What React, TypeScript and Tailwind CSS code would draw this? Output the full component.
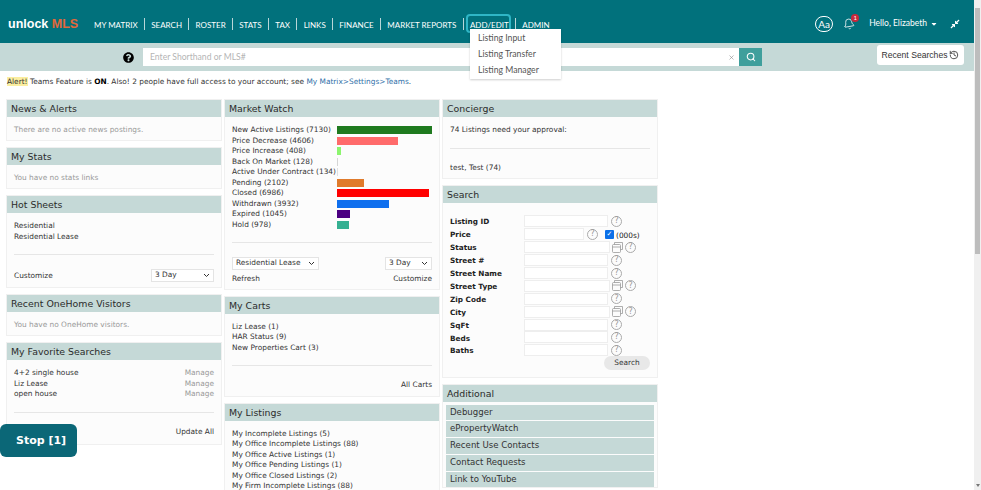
import type { ReactNode } from 'react';
import { Search, History, Bell, X } from 'lucide-react';
import { FaQuestionCircle, FaCaretDown, FaCompressAlt } from 'react-icons/fa';

const NAV = ['MY MATRIX', 'SEARCH', 'ROSTER', 'STATS', 'TAX', 'LINKS', 'FINANCE', 'MARKET REPORTS', 'ADD/EDIT', 'ADMIN'];

const WATCH = [
  { label: 'New Active Listings (7130)', w: 95, color: 'bg-[#1f7a1f]' },
  { label: 'Price Decrease (4606)', w: 61, color: 'bg-[#ff6b6b]' },
  { label: 'Price Increase (408)', w: 4, color: 'bg-[#8cf56e]' },
  { label: 'Back On Market (128)', w: 1, color: 'bg-[#d5d5d5]' },
  { label: 'Active Under Contract (134)', w: 1, color: 'bg-[#e0e0e0]' },
  { label: 'Pending (2102)', w: 27, color: 'bg-[#e07b2c]' },
  { label: 'Closed (6986)', w: 92, color: 'bg-[#ff0000]' },
  { label: 'Withdrawn (3932)', w: 52, color: 'bg-[#0f6fee]' },
  { label: 'Expired (1045)', w: 13, color: 'bg-[#4b0082]' },
  { label: 'Hold (978)', w: 12, color: 'bg-[#35b092]' },
];

const FIELDS = [
  { label: 'Listing ID' },
  { label: 'Price', price: true },
  { label: 'Status', picker: true },
  { label: 'Street #' },
  { label: 'Street Name' },
  { label: 'Street Type', picker: true },
  { label: 'Zip Code' },
  { label: 'City', picker: true },
  { label: 'SqFt' },
  { label: 'Beds' },
  { label: 'Baths' },
];

function Panel({ title, className = '', children }: { title: string; className?: string; children: ReactNode }) {
  return (
    <div className={`mb-[8px] bg-[#fcfcfc] shadow-[0_0_0_1px_#f0f0f0] ${className}`}>
      <div className="h-[17px] bg-[#c5d9d7] pl-[4px] text-[9.4px] leading-[17px] text-[#2b2b2b]">{title}</div>
      {children}
    </div>
  );
}

function Muted({ children }: { children: ReactNode }) {
  return <div className="h-[23px] pl-[7px] pt-[8px] text-[7.4px] leading-[10px] text-[#999]">{children}</div>;
}

function FakeSelect({ label, className }: { label: string; className: string }) {
  return (
    <div className={`flex h-[13px] items-center justify-between border border-[#e4e4e4] bg-white px-[3px] text-[7.4px] text-[#333] ${className}`}>
      <span className="whitespace-nowrap">{label}</span>
      <svg width="7" height="5" viewBox="0 0 7 5" fill="none" stroke="#333" strokeWidth="1"><path d="M1 1l2.5 2.5L6 1" /></svg>
    </div>
  );
}

function HelpIcon() {
  return (
    <span className="flex h-[11px] w-[11px] items-center justify-center rounded-full border border-[#aaa] text-[8px] leading-none text-[#999]">?</span>
  );
}

function PickerIcon() {
  return (
    <svg width="11" height="11" viewBox="0 0 11 11" fill="none" stroke="#999" strokeWidth="0.8">
      <rect x="0.5" y="2.5" width="8" height="8" rx="1" />
      <path d="M2.5 2.5V0.5h8v7H8.5M0.5 5h8" />
    </svg>
  );
}

function SearchRow({ label, price, picker }: { label: string; price?: boolean; picker?: boolean }) {
  return (
    <div className="flex h-[12.9px] items-center">
      <span className="w-[74px] shrink-0 pt-[3px] text-[7.3px] font-bold text-[#222]">{label}</span>
      {price ? (
        <>
          <span className="h-[12px] w-[60px] border border-[#eee] bg-white" />
          <span className="ml-[3px]"><HelpIcon /></span>
          <span className="ml-[7px] flex h-[9px] w-[9px] items-center justify-center rounded-[1px] bg-[#0b6fe8] text-[7px] font-bold leading-none text-white">✓</span>
          <span className="ml-[2px] mt-[2px] text-[7.4px] text-[#222]">(000s)</span>
        </>
      ) : picker ? (
        <>
          <span className="h-[12px] w-[86px] border border-[#eee] bg-white" />
          <span className="ml-[2px]"><PickerIcon /></span>
          <span className="ml-[2px]"><HelpIcon /></span>
        </>
      ) : (
        <>
          <span className="h-[12px] w-[84px] border border-[#eee] bg-white" />
          <span className="ml-[3px]"><HelpIcon /></span>
        </>
      )}
    </div>
  );
}

export default function App() {
  return (
    <div className="relative flex h-[490px] w-[981px] overflow-hidden bg-white font-['DejaVu_Sans',sans-serif]">
      <div className="w-[974px] shrink-0">
        {/* Top nav */}
        <div className="flex h-[43px] items-center bg-[#01717c] pt-[5px] font-['Lato',sans-serif] text-white">
          <div className="ml-[8px] w-[86px] shrink-0 font-['Liberation_Sans',sans-serif] text-[12.5px] font-bold leading-none">
            unlock <span className="text-[#e2683a]">MLS</span>
          </div>
          <div className="flex items-center text-[8px]">
            {NAV.map((item, i) => (
              <div key={item} className="flex items-center">
                <span className="whitespace-nowrap pt-[1px]">{item}</span>
                {i < NAV.length - 1 && <span className="mx-[6.3px] h-[12px] w-px bg-[#b9d6d8]" />}
              </div>
            ))}
          </div>
          <div className="ml-auto flex items-center">
            <span className="flex h-[16px] w-[18px] items-center justify-center rounded-full border border-white text-[10px]">Aa</span>
            <span className="relative ml-[10px]">
              <Bell size={12} strokeWidth={1.5} className="rotate-[-10deg]" />
              <span className="absolute -right-[4px] -top-[4px] flex h-[8px] w-[8px] items-center justify-center rounded-full bg-[#c8283c] text-[6px] leading-none">1</span>
            </span>
            <span className="ml-[14px] mb-[2px] text-[8.5px]">Hello, Elizabeth</span>
            <FaCaretDown size={8} className="ml-[3px]" />
            <FaCompressAlt size={10} className="ml-[12px] mr-[14px]" />
          </div>
        </div>

        {/* Shorthand bar */}
        <div className="flex h-[28px] items-start bg-[#c5d9d7]">
          <FaQuestionCircle size={11} className="ml-[123px] mt-[9px] text-black" />
          <div className="ml-[9px] mt-[5px] flex h-[18px] w-[596px] items-center justify-between bg-white pl-[7px] pr-[4px] font-['Lato',sans-serif] text-[8.6px] text-[#b5b5b5]">
            <span>Enter Shorthand or MLS#</span>
            <X size={7} className="text-[#888]" />
          </div>
          <div className="mt-[5px] flex h-[18px] w-[23px] items-center justify-center bg-[#3f9f9c]">
            <Search size={10} strokeWidth={2.5} className="text-white" />
          </div>
          <div className="ml-[115px] mt-[2px] flex h-[20px] w-[87px] items-center justify-center gap-[2px] rounded-[3px] bg-white font-['Liberation_Sans',sans-serif] text-[8.6px] text-[#333]">
            Recent Searches <History size={10} className="text-[#333]" />
          </div>
        </div>

        {/* Alert */}
        <div className="h-[29px] pl-[7px] pt-[6px] text-[7.4px] leading-[10px] text-[#333]">
          <span className="bg-[#fbeea0]">Alert!</span> Teams Feature is <b className="text-black">ON</b>. Also! 2 people have full access to your account; see{' '}
          <span className="text-[#2f6fa8]">My Matrix&gt;Settings&gt;Teams</span>.
        </div>

        {/* Columns */}
        <div className="flex gap-[4px] pl-[7px]">
          <div className="w-[214px] shrink-0">
            <Panel title="News &amp; Alerts"><Muted>There are no active news postings.</Muted></Panel>
            <Panel title="My Stats"><Muted>You have no stats links</Muted></Panel>
            <Panel title="Hot Sheets">
              <div className="px-[7px] pt-[8px] text-[7.4px] leading-[10.5px] text-[#333]">
                <div>Residential</div>
                <div>Residential Lease</div>
                <div className="mt-[12px] h-px bg-[#e6e6e6]" />
                <div className="flex items-center justify-between pb-[5px] pt-[14px]">
                  <span className="pt-[1px]">Customize</span>
                  <FakeSelect label="3 Day" className="w-[63px]" />
                </div>
              </div>
            </Panel>
            <Panel title="Recent OneHome Visitors"><Muted>You have no OneHome visitors.</Muted></Panel>
            <Panel title="My Favorite Searches">
              <div className="px-[7px] pt-[8px] text-[7.4px] leading-[10.5px] text-[#333]">
                {['4+2 single house', 'Liz Lease', 'open house'].map((s) => (
                  <div key={s} className="flex justify-between">
                    <span>{s}</span>
                    <span className="text-[#999]">Manage</span>
                  </div>
                ))}
                <div className="mt-[12px] h-px bg-[#e6e6e6]" />
                <div className="pb-[7px] pt-[14px] text-right">Update All</div>
              </div>
            </Panel>
          </div>

          <div className="w-[214px] shrink-0">
            <Panel title="Market Watch">
              <div className="px-[7px] pt-[8px] text-[7.4px] leading-[10.5px] text-[#333]">
                {WATCH.map((row) => (
                  <div key={row.label} className="flex h-[10.5px] items-center">
                    <span className="w-[105px] shrink-0 whitespace-nowrap">{row.label}</span>
                    <span className={`h-[8px] ${row.color}`} style={{ width: row.w }} />
                  </div>
                ))}
                <div className="mt-[12px] h-px bg-[#e6e6e6]" />
                <div className="flex justify-between pt-[14px]">
                  <FakeSelect label="Residential Lease" className="w-[87px]" />
                  <FakeSelect label="3 Day" className="w-[47px]" />
                </div>
                <div className="flex justify-between pb-[4px] pt-[4px]">
                  <span>Refresh</span>
                  <span>Customize</span>
                </div>
              </div>
            </Panel>
            <Panel title="My Carts">
              <div className="px-[7px] pt-[8px] text-[7.4px] leading-[10.5px] text-[#333]">
                <div>Liz Lease (1)</div>
                <div>HAR Status (9)</div>
                <div>New Properties Cart (3)</div>
                <div className="mt-[12px] h-px bg-[#e6e6e6]" />
                <div className="pb-[5px] pt-[14px] text-right">All Carts</div>
              </div>
            </Panel>
            <Panel title="My Listings">
              <div className="px-[7px] pt-[8px] text-[7.4px] leading-[10.5px] text-[#333]">
                <div>My Incomplete Listings (5)</div>
                <div>My Office Incomplete Listings (88)</div>
                <div>My Office Active Listings (1)</div>
                <div>My Office Pending Listings (1)</div>
                <div>My Office Closed Listings (2)</div>
                <div>My Firm Incomplete Listings (88)</div>
              </div>
            </Panel>
          </div>

          <div className="w-[214px] shrink-0">
            <Panel title="Concierge">
              <div className="px-[7px] pt-[8px] text-[7.4px] leading-[10.5px] text-[#333]">
                <div>74 Listings need your approval:</div>
                <div className="mt-[12px] h-px bg-[#e6e6e6]" />
                <div className="pb-[5px] pt-[14px]">test, Test (74)</div>
              </div>
            </Panel>
            <Panel title="Search">
              <div className="pl-[7px] pt-[12px]">
                {FIELDS.map((f) => (
                  <SearchRow key={f.label} {...f} />
                ))}
                <div className="-mt-[1px] flex justify-end pb-[7px] pr-[7px]">
                  <span className="flex h-[14px] w-[46px] items-center justify-center rounded-full bg-[#e8e8e8] text-[7.4px] text-[#333]">Search</span>
                </div>
              </div>
            </Panel>
            <Panel title="Additional">
              <div className="px-[3px] pt-[3px]">
                {['Debugger', 'ePropertyWatch', 'Recent Use Contacts', 'Contact Requests', 'Link to YouTube'].map((s) => (
                  <div key={s} className="mb-[1px] h-[15.7px] bg-[#c5d9d7] pl-[4px] text-[8.6px] leading-[15.7px] text-[#333]">{s}</div>
                ))}
              </div>
            </Panel>
          </div>
        </div>
      </div>

      {/* Scrollbar */}
      <div className="flex w-[7px] shrink-0 flex-col items-center bg-[#f0f0f0] pt-[8px]">
        <div className="h-[246px] w-[5px] bg-[#bdbdbd]" />
        <div className="mt-auto mb-[3px] h-0 w-0 border-x-[2px] border-t-[3px] border-x-transparent border-t-[#777]" />
      </div>

      {/* ADD/EDIT focus ring and menu */}
      <div className="absolute left-[466px] top-[14px] h-[19px] w-[45px] rounded-[4px] border-2 border-[#2fb6c6]" />
      <div className="absolute left-[470px] top-[29px] w-[91px] bg-white py-[1px] pl-[8px] font-['Lato',sans-serif] text-[8.7px] leading-[16px] text-[#555] shadow-[0_1px_2px_rgba(0,0,0,0.2)]">
        <div>Listing Input</div>
        <div>Listing Transfer</div>
        <div>Listing Manager</div>
      </div>

      {/* Stop */}
      <div className="absolute left-0 top-[424px] flex h-[33px] w-[77px] items-center rounded-[6px] bg-[#0b6777] pl-[16px] pt-[2px] text-[11px] font-bold text-white">
        Stop [1]
      </div>
    </div>
  );
}
